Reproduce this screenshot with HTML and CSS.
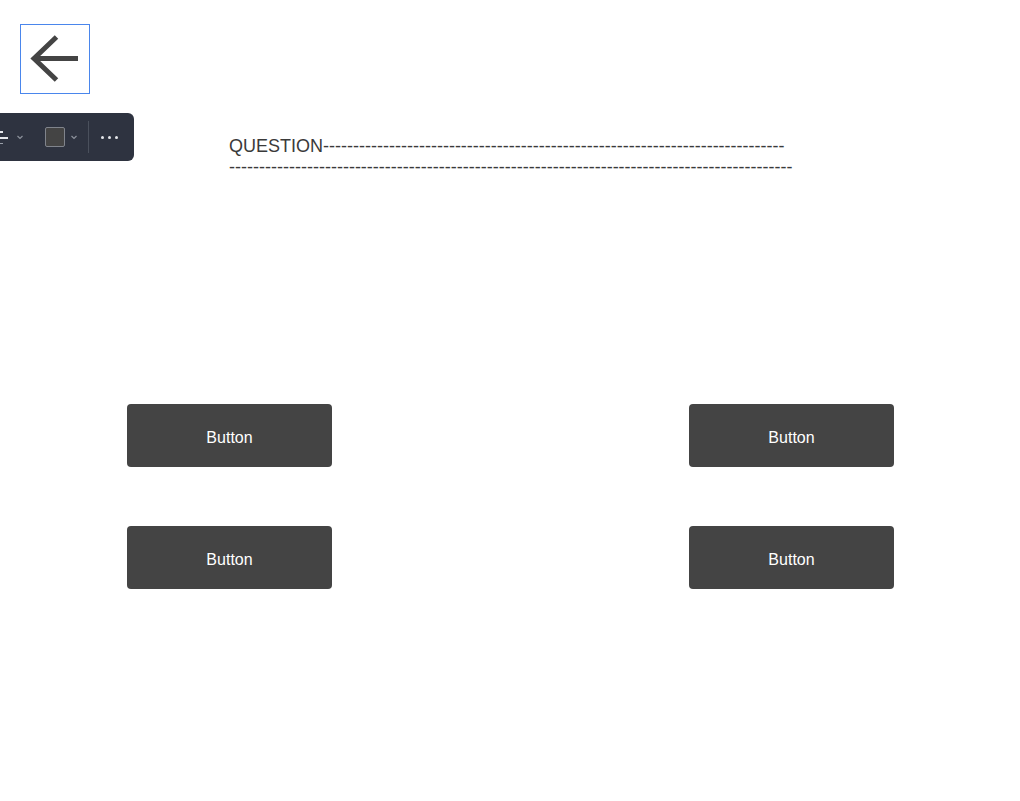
FILE: index.html
```html
<!DOCTYPE html>
<html>
<head>
<meta charset="utf-8">
<link rel="stylesheet" href="styles.css">
</head>
<body>
<div class="page">
  <div class="back">
    <svg width="68" height="68" viewBox="0 0 68 68">
      <path d="M57 33.5 H14" stroke="#444" stroke-width="5" fill="none"/>
      <path d="M35.5 12 L13 33.5 L35.5 55" stroke="#444" stroke-width="5" fill="none" stroke-linejoin="miter"/>
    </svg>
  </div>

  <div class="toolbar">
    <div class="tool first">
      <svg width="10" height="20" viewBox="0 0 10 20">
        <rect x="0" y="4" width="3" height="2" fill="#e6e8ec"/>
        <rect x="0" y="10" width="8" height="2" fill="#e6e8ec"/>
        <rect x="0" y="16" width="3" height="1" fill="#9aa0aa"/>
      </svg>
      <svg class="chev" width="8" height="6" viewBox="0 0 8 6"><path d="M1.5 2 L4 4.5 L6.5 2" stroke="#8d929c" stroke-width="1.2" fill="none"/></svg>
    </div>
    <div class="tool">
      <span class="swatch"></span>
      <svg class="chev" width="8" height="6" viewBox="0 0 8 6"><path d="M1.5 2 L4 4.5 L6.5 2" stroke="#8d929c" stroke-width="1.2" fill="none"/></svg>
    </div>
    <span class="divider"></span>
    <div class="more"><span></span><span></span><span></span></div>
  </div>

  <p class="question">QUESTION----------------------------------------------------------------------------- ----------------------------------------------------------------------------------------------</p>

  <div class="grid">
    <button class="btn">Button</button>
    <button class="btn">Button</button>
    <button class="btn">Button</button>
    <button class="btn">Button</button>
  </div>
</div>
</body>
</html>
```

FILE: styles.css
```css
html, body {
  margin: 0;
  padding: 0;
  background: #fff;
}
.page {
  position: relative;
  width: 1020px;
  height: 801px;
  font-family: "Liberation Sans", Arial, sans-serif;
  padding: 24px 0 0 20px;
  box-sizing: border-box;
}
.back {
  width: 68px;
  height: 68px;
  border: 1px solid #4a86ec;
}
.back svg { display: block; }

.toolbar {
  position: absolute;
  left: -20px;
  top: 113px;
  width: 154px;
  height: 48px;
  background: #2e3340;
  border-radius: 6px;
  display: flex;
  align-items: center;
  box-sizing: border-box;
  padding-left: 20px;
}
.tool {
  display: flex;
  align-items: center;
}
.tool.first { width: 44px; }
.tool.first svg { display: block; }
.tool.first .chev { margin-left: 6px; }
.swatch {
  width: 18px;
  height: 18px;
  background: #444;
  border: 1px solid #80848c;
  border-radius: 2px;
  margin-left: 1px;
}
.tool .chev { display: block; margin-left: 5px; }
.divider {
  width: 1px;
  height: 32px;
  background: #4a505c;
  margin-left: 10px;
}
.more {
  display: flex;
  gap: 4px;
  margin-left: 12px;
}
.more span {
  width: 3px;
  height: 3px;
  border-radius: 50%;
  background: #e4e6ea;
}

.question {
  margin: 42px 0 0 209px;
  width: 566px;
  font-size: 18px;
  color: #3a3a3a;
  line-height: normal;
}

.grid {
  display: grid;
  grid-template-columns: 205px 205px;
  column-gap: 357px;
  row-gap: 59px;
  margin: 226px 0 0 107px;
}
.btn {
  width: 205px;
  height: 63px;
  background: #444;
  color: #fff;
  border: none;
  border-radius: 4px;
  font-family: "Liberation Sans", Arial, sans-serif;
  font-size: 16px;
  padding: 4px 0 0;
  box-sizing: border-box;
}
```
